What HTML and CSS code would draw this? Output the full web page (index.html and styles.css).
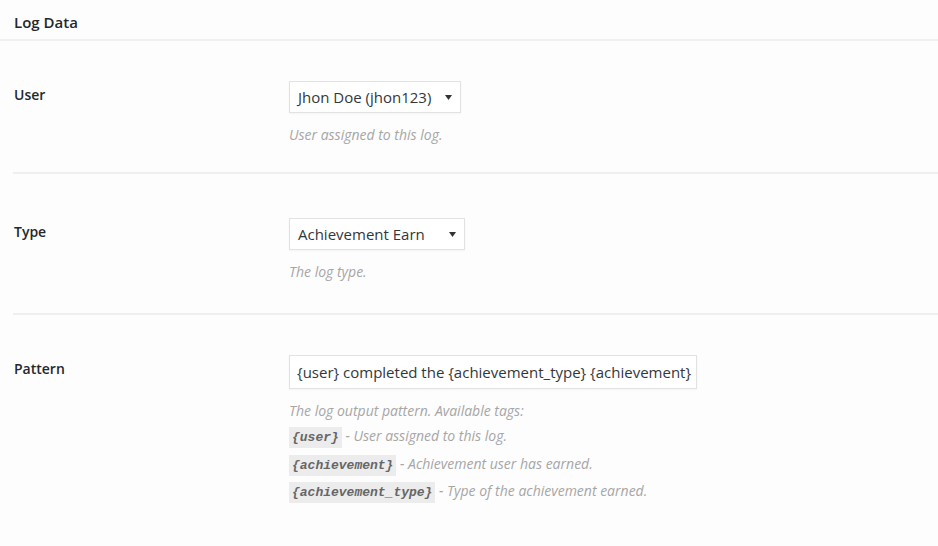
FILE: index.html
```html
<!DOCTYPE html>
<html>

<head>
    <title>Log Data</title>
    <link rel="stylesheet" href="styles.css">
</head>

<body>
    <div class="panel">
        <div class="panel-head">Log Data</div>

        <div class="rows">
            <div class="row row-user">
                <div class="row-label">User</div>
                <div class="row-field">
                    <div class="select select-user">
                        <span>Jhon Doe (jhon123)</span>
                        <svg class="caret" width="7" height="5" viewBox="0 0 7 5"><path d="M0 0h7L3.5 5z" fill="#333"/></svg>
                    </div>
                    <p class="desc">User assigned to this log.</p>
                </div>
            </div>

            <div class="row row-type">
                <div class="row-label">Type</div>
                <div class="row-field">
                    <div class="select select-type">
                        <span>Achievement Earn</span>
                        <svg class="caret" width="7" height="5" viewBox="0 0 7 5"><path d="M0 0h7L3.5 5z" fill="#333"/></svg>
                    </div>
                    <p class="desc">The log type.</p>
                </div>
            </div>

            <div class="row row-pattern">
                <div class="row-label">Pattern</div>
                <div class="row-field">
                    <div class="text-input">{user} completed the {achievement_type} {achievement}</div>
                    <p class="desc">The log output pattern. Available tags:</p>
                    <ul class="tags">
                        <li><code>{user}</code> - User assigned to this log.</li>
                        <li><code>{achievement}</code> - Achievement user has earned.</li>
                        <li><code>{achievement_type}</code> - Type of the achievement earned.</li>
                    </ul>
                </div>
            </div>
        </div>
    </div>
</body>

</html>
```

FILE: styles.css
```css
html, body {
    margin: 0;
    height: 100%;
}

body {
    font-family: "Open Sans", "Noto Sans", Arial, sans-serif;
    font-size: 14px;
    color: #23282d;
    background-color: #fdfdfd;
    overflow: hidden;
}

.panel-head {
    height: 39px;
    line-height: 44px;
    padding-left: 14px;
    font-size: 15px;
    font-weight: 600;
    border-bottom: 2px solid #f1f1f1;
}

.rows {
    margin-left: 13px;
}

.row {
    display: flex;
    border-bottom: 2px solid #efefef;
}

.row-user {
    height: 133px;
    padding-top: 40px;
    box-sizing: border-box;
}

.row-type {
    height: 141px;
    padding-top: 44px;
    box-sizing: border-box;
}

.row-pattern {
    padding-top: 40px;
    border-bottom: none;
}

.row-label {
    width: 275px;
    padding-left: 1px;
    padding-top: 4px;
    font-weight: 600;
}

.row-field {
    flex: 1;
}

.select {
    display: flex;
    align-items: center;
    justify-content: space-between;
    height: 30px;
    padding: 0 8px 0 8px;
    font-size: 15px;
    border: 1px solid #e2e2e2;
    background-color: #fff;
    box-shadow: 0 1px 2px rgba(0, 0, 0, 0.04);
    color: #32373c;
}

.select-user {
    width: 154px;
}

.select-type {
    width: 158px;
}

.caret {
    margin-top: 1px;
}

.text-input {
    width: 392px;
    height: 32px;
    line-height: 32px;
    padding: 0 7px;
    font-size: 15px;
    border: 1px solid #e2e2e2;
    background-color: #fff;
    box-shadow: 0 1px 2px rgba(0, 0, 0, 0.04);
    color: #32373c;
    white-space: nowrap;
    overflow: hidden;
}

.desc {
    margin: 12px 0 0 0;
    font-size: 14px;
    font-style: italic;
    color: #a6a6a6;
}

.tags {
    list-style: none;
    margin: 2px 0 0 0;
    padding: 0;
    font-size: 14px;
    font-style: italic;
    color: #a6a6a6;
}

.tags li {
    height: 27.5px;
    line-height: 27px;
}

.tags code {
    font-family: "Liberation Mono", "DejaVu Sans Mono", monospace;
    font-size: 13px;
    font-weight: bold;
    color: #666;
    background-color: #ececec;
    padding: 3px 3px;
}
```
